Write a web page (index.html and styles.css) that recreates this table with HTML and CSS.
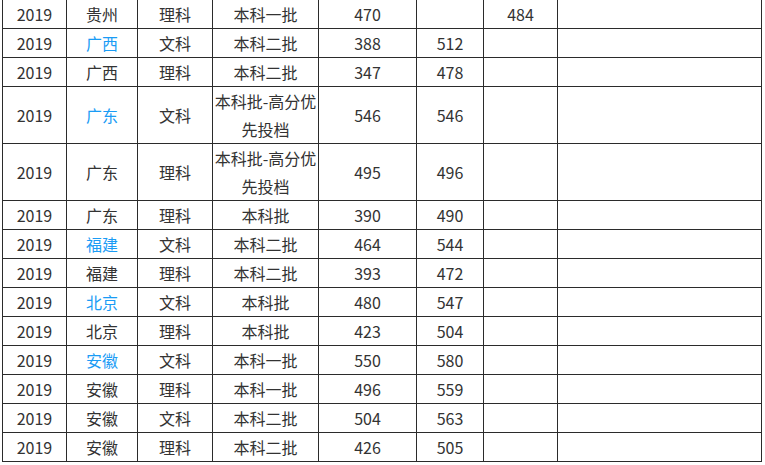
FILE: index.html
```html
<!DOCTYPE html>
<html lang="zh-CN">
<head>
<meta charset="utf-8">
<title>2019 录取分数</title>
<link rel="stylesheet" href="styles.css">
</head>
<body>
<div class="wrap">
<table class="score">
<colgroup>
<col class="c1"><col class="c2"><col class="c3"><col class="c4"><col class="c5"><col class="c6"><col class="c7"><col class="c8">
</colgroup>
<tbody>
<tr><td>2019</td><td>贵州</td><td>理科</td><td>本科一批</td><td>470</td><td></td><td>484</td><td></td></tr>
<tr><td>2019</td><td class="hl">广西</td><td>文科</td><td>本科二批</td><td>388</td><td>512</td><td></td><td></td></tr>
<tr><td>2019</td><td>广西</td><td>理科</td><td>本科二批</td><td>347</td><td>478</td><td></td><td></td></tr>
<tr><td>2019</td><td class="hl">广东</td><td>文科</td><td>本科批-高分优先投档</td><td>546</td><td>546</td><td></td><td></td></tr>
<tr><td>2019</td><td>广东</td><td>理科</td><td>本科批-高分优先投档</td><td>495</td><td>496</td><td></td><td></td></tr>
<tr><td>2019</td><td>广东</td><td>理科</td><td>本科批</td><td>390</td><td>490</td><td></td><td></td></tr>
<tr><td>2019</td><td class="hl">福建</td><td>文科</td><td>本科二批</td><td>464</td><td>544</td><td></td><td></td></tr>
<tr><td>2019</td><td>福建</td><td>理科</td><td>本科二批</td><td>393</td><td>472</td><td></td><td></td></tr>
<tr><td>2019</td><td class="hl">北京</td><td>文科</td><td>本科批</td><td>480</td><td>547</td><td></td><td></td></tr>
<tr><td>2019</td><td>北京</td><td>理科</td><td>本科批</td><td>423</td><td>504</td><td></td><td></td></tr>
<tr><td>2019</td><td class="hl">安徽</td><td>文科</td><td>本科一批</td><td>550</td><td>580</td><td></td><td></td></tr>
<tr><td>2019</td><td>安徽</td><td>理科</td><td>本科一批</td><td>496</td><td>559</td><td></td><td></td></tr>
<tr><td>2019</td><td>安徽</td><td>文科</td><td>本科二批</td><td>504</td><td>563</td><td></td><td></td></tr>
<tr><td>2019</td><td>安徽</td><td>理科</td><td>本科二批</td><td>426</td><td>505</td><td></td><td></td></tr>
</tbody>
</table>
</div>
</body>
</html>
```

FILE: styles.css
```css
html, body {
  margin: 0;
  padding: 0;
  background: #ffffff;
}
.wrap {
  padding-left: 2px;
}
.score {
  margin-top: -1px;
  border-collapse: collapse;
  table-layout: fixed;
  width: 760px;
  font-family: "Noto Sans CJK SC", "Noto Sans", sans-serif;
  font-size: 16px;
  color: #333333;
}
.score td {
  border: 1px solid #2b2b2b;
  padding: 0 1px;
  height: 28px;
  line-height: 28px;
  text-align: center;
  vertical-align: middle;
}
.c1 { width: 64px; }
.c2 { width: 71px; }
.c3 { width: 75px; }
.c4 { width: 106px; }
.c5 { width: 98px; }
.c6 { width: 67px; }
.c7 { width: 74px; }
.c8 { width: 204px; }
.hl {
  color: #1a9cf5;
}
```
